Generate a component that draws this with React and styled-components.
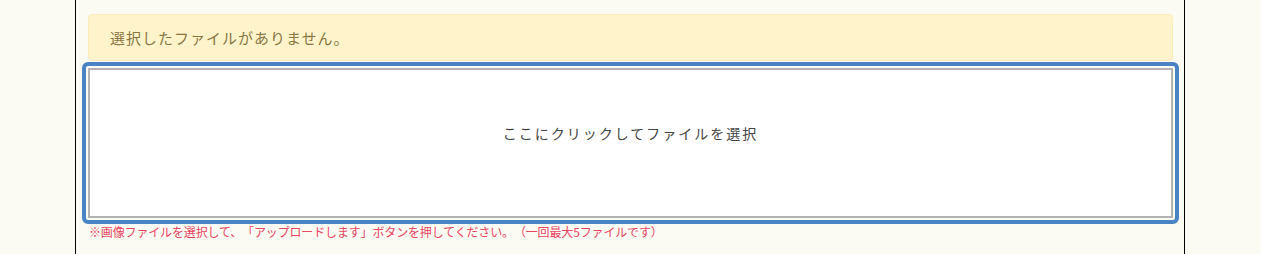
import React from 'react';
import styled, { createGlobalStyle } from 'styled-components';

const GlobalStyle = createGlobalStyle`
  html, body {
    margin: 0;
    padding: 0;
    background: #fbfaf3;
  }
  body {
    font-family: "Noto Sans CJK JP", "Noto Sans", sans-serif;
    text-spacing-trim: space-all;
  }
`;

const App = () => {
  return (
    <>
      <GlobalStyle />
      <Page>
        <Column>
          <Alert>選択したファイルがありません。</Alert>
          <FocusFrame>
            <DropZone>ここにクリックしてファイルを選択</DropZone>
          </FocusFrame>
          <Note>※画像ファイルを選択して、「アップロードします」ボタンを押してください。（一回最大5ファイルです）</Note>
        </Column>
      </Page>
    </>
  );
};

export default App;

const Page = styled.div`
  width: 100%;
  min-height: 254px;
  display: flex;
  padding-left: 75px;
  box-sizing: border-box;
`;

const Column = styled.div`
  width: 1110px;
  min-height: 254px;
  box-sizing: border-box;
  border-left: 1px solid #000;
  border-right: 1px solid #000;
  padding: 14px 11px 0 12px;
  display: flex;
  flex-direction: column;
`;

const Alert = styled.div`
  height: 47px;
  box-sizing: border-box;
  display: flex;
  align-items: center;
  padding: 0 21px;
  background: #fff3cc;
  border: 1px solid #fcecbc;
  border-radius: 4px;
  color: #8a7640;
  font-size: 15px;
  letter-spacing: 1px;
`;

const FocusFrame = styled.div`
  margin: 1px -6px 0 -6px;
  padding: 2px;
  border: 4px solid #4a84c4;
  border-radius: 6px;
`;

const DropZone = styled.div`
  height: 150px;
  box-sizing: border-box;
  border: 2px solid #b3b3b3;
  background: #fff;
  padding-top: 53px;
  text-align: center;
  font-size: 14px;
  line-height: 20px;
  letter-spacing: 2px;
  color: #444;
  cursor: pointer;
`;

const Note = styled.p`
  margin: 0 0 0 1px;
  font-size: 12px;
  line-height: 15px;
  letter-spacing: -0.15px;
  color: #e8455f;
`;
